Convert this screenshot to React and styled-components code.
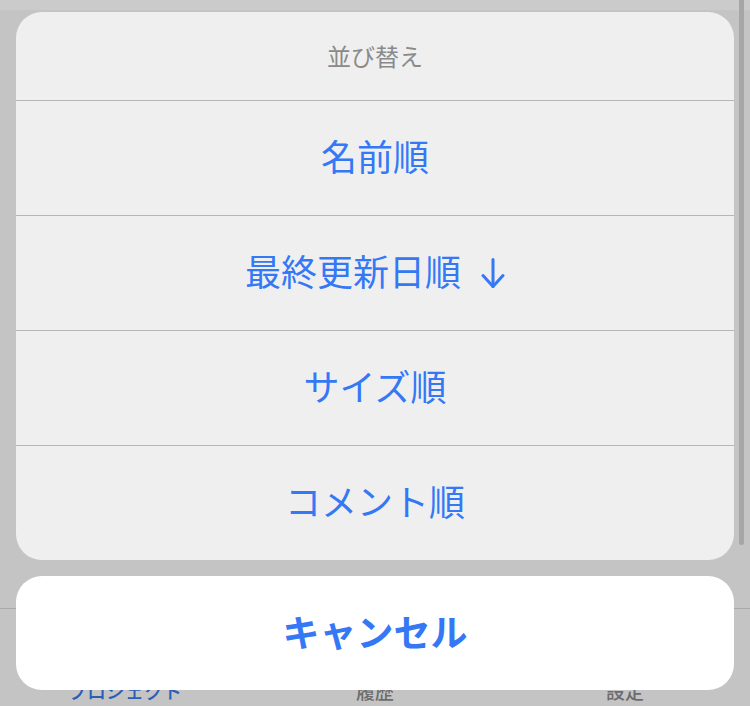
import React from "react";
import styled, { createGlobalStyle } from "styled-components";

const GlobalStyle = createGlobalStyle`
  html, body {
    margin: 0;
    padding: 0;
    background: #c4c4c4;
  }
  body {
    font-family: "Noto Sans CJK JP", "Noto Sans", sans-serif;
  }
`;

const Screen = styled.div`
  position: relative;
  width: 750px;
  height: 706px;
  overflow: hidden;
  background: #c4c4c4;
  display: flex;
  flex-direction: column;
`;

const TopBand = styled.div`
  height: 10px;
  background: #cbcbcb;
`;

const Content = styled.div`
  flex: 1;
`;

const TabBar = styled.div`
  height: 98px;
  border-top: 1px solid #a9a9a9;
  display: grid;
  grid-template-columns: repeat(3, 1fr);
  align-items: start;
  padding-top: 68px;
  box-sizing: border-box;
`;

const Tab = styled.div`
  text-align: center;
  font-size: 19px;
  line-height: 28px;
  font-weight: 500;
  color: ${(p) => (p.$active ? "#2b5fb6" : "#6c6c6c")};
  padding-left: ${(p) => p.$shift || 0}px;
`;

const ScrollThumb = styled.div`
  position: absolute;
  top: 0;
  right: 6px;
  width: 5px;
  height: 545px;
  border-radius: 0 0 3px 3px;
  background: #a6a6a6;
`;

const Overlay = styled.div`
  position: absolute;
  inset: 0;
  padding: 12px 16px 16px;
  display: flex;
  flex-direction: column;
  gap: 16px;
`;

const Sheet = styled.div`
  background: #efefef;
  border-radius: 26px;
  overflow: hidden;
`;

const SheetTitle = styled.div`
  height: 88px;
  display: flex;
  align-items: center;
  justify-content: center;
  font-size: 24px;
  color: #8a8a8a;
  padding-bottom: 2px;
  box-sizing: border-box;
`;

const Option = styled.div`
  height: 108px;
  padding-bottom: 6px;
  border-top: 1px solid #b6b6b6;
  display: flex;
  align-items: center;
  justify-content: center;
  font-size: 36px;
  color: #3478f6;
`;

const ArrowIcon = styled.svg`
  width: 24px;
  height: 32px;
  margin-left: 20px;
  margin-top: 5px;
  flex: none;
`;

const CancelButton = styled.div`
  height: 110px;
  padding-bottom: 4px;
  background: #ffffff;
  border-radius: 26px;
  display: flex;
  align-items: center;
  justify-content: center;
  font-size: 37px;
  font-weight: 700;
  color: #3478f6;
`;

const DownArrow = () => (
  <ArrowIcon viewBox="0 0 24 32" fill="none" stroke="currentColor" strokeWidth="3" strokeLinecap="round" strokeLinejoin="round">
    <path d="M12 2.5V29.5" />
    <path d="M2 18.5L12 29.5L22 18.5" />
  </ArrowIcon>
);

const options = ["名前順", "最終更新日順", "サイズ順", "コメント順"];

const App = () => {
  return (
    <>
      <GlobalStyle />
      <Screen>
        <TopBand />
        <Content />
        <TabBar>
          <Tab $active $shift={-2}>プロジェクト</Tab>
          <Tab>履歴</Tab>
          <Tab>設定</Tab>
        </TabBar>
        <ScrollThumb />
        <Overlay>
          <Sheet>
            <SheetTitle>並び替え</SheetTitle>
            {options.map((label, i) => (
              <Option key={label}>
                {label}
                {i === 1 && <DownArrow />}
              </Option>
            ))}
          </Sheet>
          <CancelButton>キャンセル</CancelButton>
        </Overlay>
      </Screen>
    </>
  );
};

export default App;
